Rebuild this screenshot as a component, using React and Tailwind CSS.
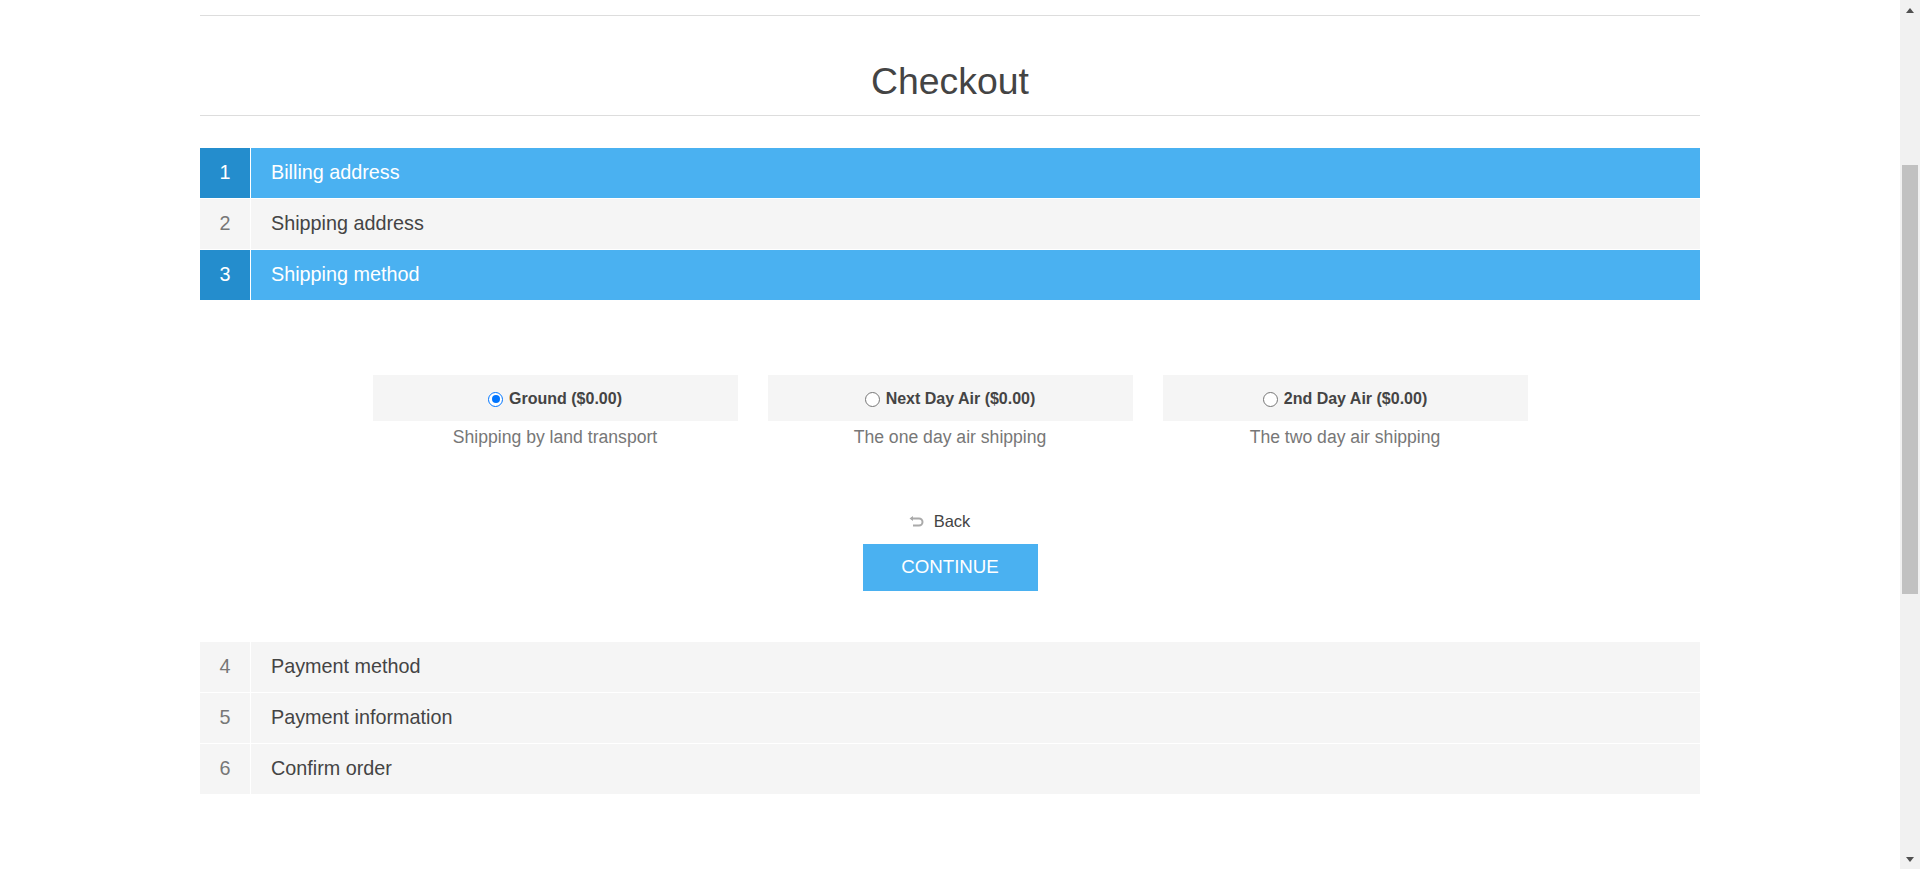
import React from "react";

const steps = [
  { n: 1, label: "Billing address", active: true },
  { n: 2, label: "Shipping address", active: false },
  { n: 3, label: "Shipping method", active: true },
];

const laterSteps = [
  { n: 4, label: "Payment method" },
  { n: 5, label: "Payment information" },
  { n: 6, label: "Confirm order" },
];

const methods = [
  { name: "Ground ($0.00)", desc: "Shipping by land transport", checked: true },
  { name: "Next Day Air ($0.00)", desc: "The one day air shipping", checked: false },
  { name: "2nd Day Air ($0.00)", desc: "The two day air shipping", checked: false },
];

const StepRow = ({ n, label, active }) => (
  <div
    className={`flex h-[50px] mb-[1px] ${active ? "bg-[#4ab1f1]" : "bg-[#f5f5f5]"}`}
  >
    <div
      className={`w-[51px] shrink-0 flex items-center justify-center border-r border-white text-[19.8px] ${
        active ? "bg-[#248dcd] text-white" : "text-[#777]"
      }`}
    >
      {n}
    </div>
    <div
      className={`flex items-center pl-[20px] text-[19.8px] ${
        active ? "text-white" : "text-[#444]"
      }`}
    >
      {label}
    </div>
  </div>
);

const Radio = ({ checked }) =>
  checked ? (
    <span className="w-[15px] h-[15px] rounded-full border-[1.5px] border-[#0075ff] bg-white flex items-center justify-center shrink-0">
      <span className="w-[8px] h-[8px] rounded-full bg-[#0075ff]" />
    </span>
  ) : (
    <span className="w-[15px] h-[15px] rounded-full border border-[#767676] bg-white shrink-0" />
  );

const ShippingOption = ({ name, desc, checked }) => (
  <div className="w-[365px] flex flex-col items-center">
    <label className="w-full h-[46px] pt-[2px] bg-[#f5f5f5] flex items-center justify-center gap-[6px] cursor-pointer">
      <Radio checked={checked} />
      <span className="text-[16px] font-bold text-[#444]">{name}</span>
    </label>
    <div className="mt-[6px] leading-[20px] text-[17.6px] text-[#777]">{desc}</div>
  </div>
);

const BackIcon = () => (
  <svg width="16" height="11" viewBox="0 0 16 11" fill="none">
    <path d="M2 2.5h8a3.5 3.5 0 0 1 0 7H4" stroke="#aaa" strokeWidth="2" />
    <path d="M0.5 2.5 4 0v5z" fill="#aaa" />
  </svg>
);

const Scrollbar = () => (
  <div className="w-[20px] shrink-0 h-full bg-[#f1f1f1] flex flex-col items-center">
    <div className="h-[20px] flex items-center justify-center">
      <div className="w-0 h-0 border-x-[4.5px] border-x-transparent border-b-[5px] border-b-[#505050]" />
    </div>
    <div className="h-[145px]" />
    <div className="w-[16px] h-[429px] bg-[#c1c1c1]" />
    <div className="flex-1" />
    <div className="h-[20px] flex items-center justify-center">
      <div className="w-0 h-0 border-x-[4.5px] border-x-transparent border-t-[5px] border-t-[#505050]" />
    </div>
  </div>
);

const App = () => {
  return (
    <div
      className="flex h-[869px] overflow-hidden bg-white"
      style={{ fontFamily: '"Liberation Sans", Arial, sans-serif' }}
    >
      <div className="flex-1 min-w-0">
        <div className="w-[1500px] mx-auto pt-[15px]">
          <div className="border-t border-[#ddd]" />
          <div className="pt-[44px] pb-[12px] border-b border-[#ddd] text-center">
            <h1 className="text-[37.4px] leading-[43px] text-[#444]">Checkout</h1>
          </div>

          <div className="mt-[32px]">
            {steps.map((s) => (
              <StepRow key={s.n} {...s} />
            ))}
          </div>

          <div className="pt-[74px] flex justify-center gap-[30px]">
            {methods.map((m) => (
              <ShippingOption key={m.name} {...m} />
            ))}
          </div>

          <div className="mt-[65px] flex flex-col items-center">
            <a className="flex items-center gap-[9px] pr-[21px] leading-[19px] text-[16.5px] text-[#444] cursor-pointer">
              <BackIcon />
              Back
            </a>
            <button className="mt-[13px] w-[175px] h-[47px] bg-[#4ab1f1] text-white text-[18.7px]">
              CONTINUE
            </button>
          </div>

          <div className="mt-[51px]">
            {laterSteps.map((s) => (
              <StepRow key={s.n} {...s} active={false} />
            ))}
          </div>
        </div>
      </div>
      <Scrollbar />
    </div>
  );
};

export default App;
